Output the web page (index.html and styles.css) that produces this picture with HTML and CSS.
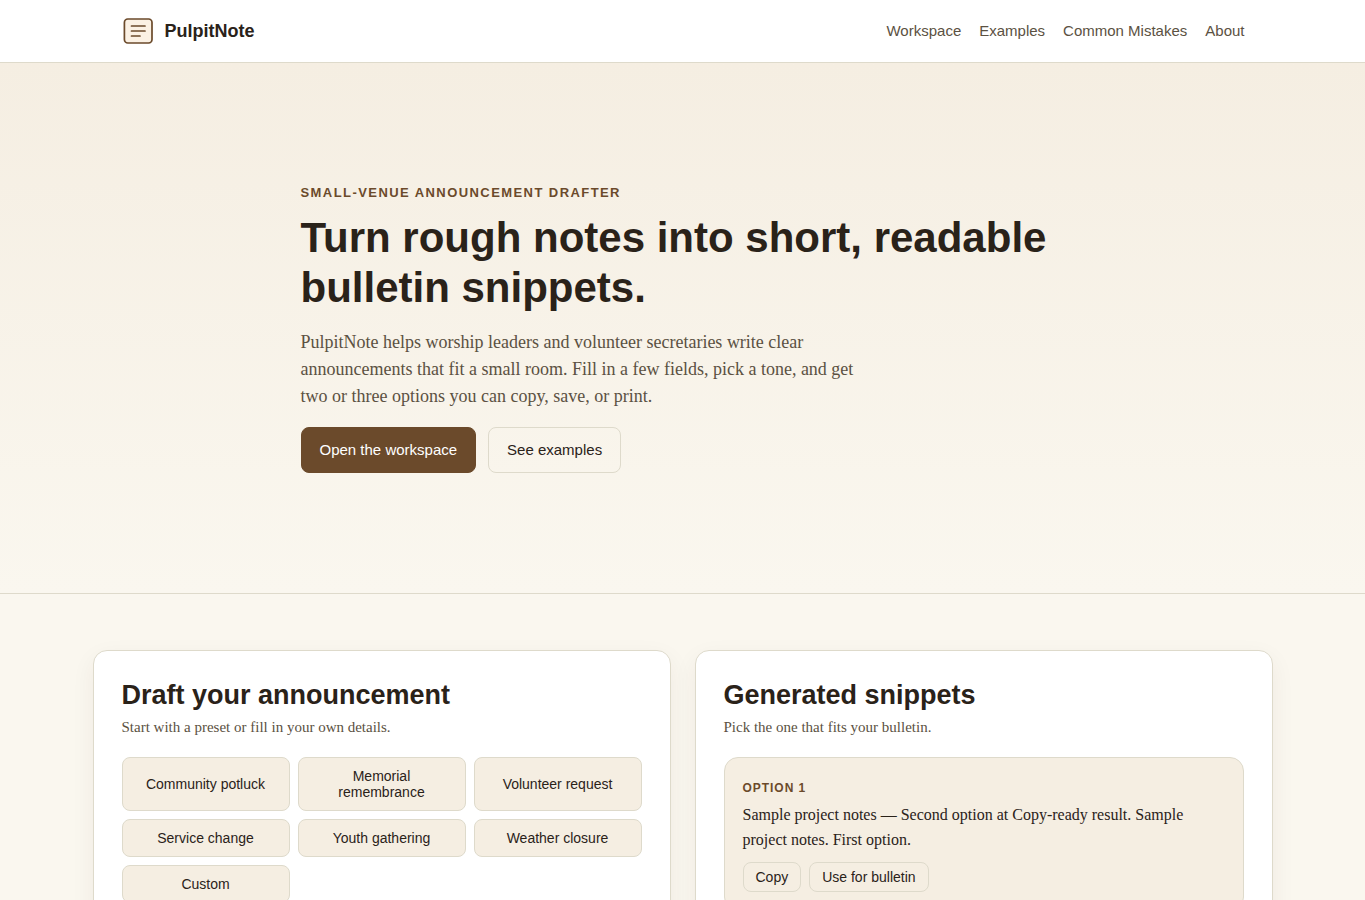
FILE: index.html
```html
<!DOCTYPE html>
<html lang="en">
<head>
  <meta charset="UTF-8" />
  <meta name="viewport" content="width=device-width, initial-scale=1.0"/>
  <title>PulpitNote</title>
  <link rel="stylesheet" href="styles.css">
</head>
<body>
  <header class="site-header">
    <div class="header-inner">
      <a class="brand" href="#">
        <svg width="34" height="34" viewBox="0 0 34 34" fill="none" aria-hidden="true">
          <rect x="3.4" y="5" width="27.6" height="24" rx="3.4" fill="#fbf1e4" stroke="#6b4a2b" stroke-width="1.7"/>
          <path d="M10.5 12H24M10.5 17H24M10.5 22H19" stroke="#6b4a2b" stroke-width="1.7" stroke-linecap="round"/>
        </svg>
        <span>PulpitNote</span>
      </a>
      <nav class="site-nav">
        <a href="#workspace">Workspace</a>
        <a href="#examples">Examples</a>
        <a href="#mistakes">Common Mistakes</a>
        <a href="#about">About</a>
      </nav>
    </div>
  </header>

  <main>
    <section class="hero">
      <div class="hero-inner">
        <p class="eyebrow">Small-venue announcement drafter</p>
        <h1>Turn rough notes into short, readable bulletin snippets.</h1>
        <p class="lead">PulpitNote helps worship leaders and volunteer secretaries write clear announcements that fit a small room. Fill in a few fields, pick a tone, and get two or three options you can copy, save, or print.</p>
        <div class="hero-actions">
          <a class="btn btn-primary" href="#workspace">Open the workspace</a>
          <a class="btn" href="#examples">See examples</a>
        </div>
      </div>
    </section>

    <div class="workspace" id="workspace">
      <section class="card">
        <h2>Draft your announcement</h2>
        <p class="card-sub">Start with a preset or fill in your own details.</p>
        <div class="presets">
          <button type="button">Community potluck</button>
          <button type="button">Memorial remembrance</button>
          <button type="button">Volunteer request</button>
          <button type="button">Service change</button>
          <button type="button">Youth gathering</button>
          <button type="button">Weather closure</button>
          <button type="button">Custom</button>
        </div>
      </section>

      <section class="card">
        <h2>Generated snippets</h2>
        <p class="card-sub">Pick the one that fits your bulletin.</p>
        <article class="option">
          <h3>Option 1</h3>
          <p>Sample project notes — Second option at Copy-ready result. Sample project notes. First option.</p>
          <div class="option-actions">
            <button type="button">Copy</button>
            <button type="button">Use for bulletin</button>
          </div>
        </article>
      </section>
    </div>
  </main>
</body>
</html>
```
FILE: styles.css
```css
:root {
  --bg: #faf7ef;
  --soft: #f5eee2;
  --line: #dedacb;
  --ink: #2a2219;
  --muted: #5b5142;
  --brown: #6b4a2b;
  --sans: "Liberation Sans", Arial, sans-serif;
  --serif: "Liberation Serif", "Times New Roman", serif;
}

* {
  box-sizing: border-box;
  margin: 0;
  padding: 0;
}

body {
  font-family: var(--serif);
  background: var(--bg);
  color: var(--ink);
}

a {
  text-decoration: none;
}

button {
  font-family: var(--sans);
  color: var(--ink);
  border: 1px solid var(--line);
  border-radius: 8px;
  cursor: pointer;
}

/* Header */
.site-header {
  background: #fff;
  border-bottom: 1px solid var(--line);
}

.header-inner {
  max-width: 1180px;
  margin: 0 auto;
  padding: 14px 28px;
  display: flex;
  align-items: center;
  justify-content: space-between;
}

.brand {
  display: flex;
  align-items: center;
  gap: 10px;
  font: bold 18px/21px var(--sans);
  color: var(--ink);
}

.site-nav {
  display: flex;
  gap: 18px;
  font: 15px/24px var(--sans);
}

.site-nav a {
  color: var(--muted);
}

/* Hero */
.hero {
  background: linear-gradient(to bottom, var(--soft), var(--bg));
  border-bottom: 1px solid var(--line);
}

.hero-inner {
  max-width: 820px;
  margin: 0 auto;
  padding: 120px 28px;
}

.eyebrow {
  font: bold 13px/20px var(--sans);
  letter-spacing: 0.11em;
  text-transform: uppercase;
  color: var(--brown);
  margin-bottom: 10px;
}

.hero h1 {
  font: bold 42px/50px var(--sans);
  margin-bottom: 16px;
}

.lead {
  max-width: 560px;
  font-size: 18px;
  line-height: 27px;
  color: var(--muted);
  margin-bottom: 17px;
}

.hero-actions {
  display: flex;
  gap: 12px;
}

.btn {
  font: 15px/20px var(--sans);
  padding: 12px 18px;
  border: 1px solid var(--line);
  border-radius: 8px;
  color: var(--ink);
}

.btn-primary {
  background: var(--brown);
  border-color: var(--brown);
  color: #fff;
}

/* Workspace */
.workspace {
  max-width: 1180px;
  margin: 0 auto;
  padding: 56px 0;
  display: grid;
  grid-template-columns: 1fr 1fr;
  gap: 24px;
}

.card {
  background: #fff;
  border: 1px solid var(--line);
  border-radius: 14px;
  padding: 28px;
  box-shadow: 0 8px 24px rgba(60, 40, 15, 0.06);
}

.card h2 {
  font: bold 27px/32px var(--sans);
  margin-bottom: 4px;
}

.card-sub {
  font-size: 15px;
  line-height: 24px;
  color: var(--muted);
  margin-bottom: 18px;
}

.presets {
  display: grid;
  grid-template-columns: repeat(3, 1fr);
  gap: 8px;
}

.presets button {
  background: var(--soft);
  font-size: 14px;
  line-height: 16px;
  padding: 10px 12px;
}

.option {
  background: var(--soft);
  border: 1px solid var(--line);
  border-radius: 14px;
  padding: 18px;
}

.option h3 {
  font: bold 12px/24px var(--sans);
  letter-spacing: 0.08em;
  text-transform: uppercase;
  color: var(--brown);
  margin-bottom: 2px;
}

.option p {
  font-size: 16px;
  line-height: 25px;
  margin-bottom: 10px;
}

.option-actions {
  display: flex;
  gap: 8px;
}

.option-actions button {
  background: transparent;
  font-size: 14px;
  line-height: 16px;
  padding: 6px 12px;
}
```
